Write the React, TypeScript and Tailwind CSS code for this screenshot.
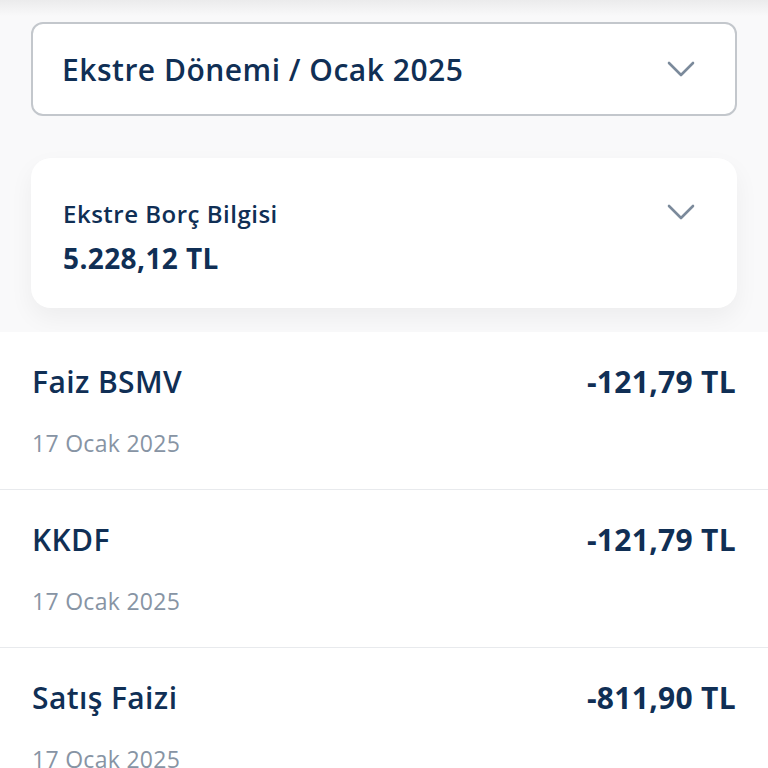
import { useState } from "react";

const rows = [
  { title: "Faiz BSMV", amount: "-121,79 TL", date: "17 Ocak 2025" },
  { title: "KKDF", amount: "-121,79 TL", date: "17 Ocak 2025" },
  { title: "Satış Faizi", amount: "-811,90 TL", date: "17 Ocak 2025" },
];

const Chevron = ({ className }: { className?: string }) => (
  <svg viewBox="0 0 28 16" className={className} fill="none">
    <path
      d="M2 2l12 12L26 2"
      stroke="currentColor"
      strokeWidth="2.6"
      strokeLinecap="round"
      strokeLinejoin="round"
    />
  </svg>
);

const App = () => {
  const [open, setOpen] = useState(false);

  return (
    <div className="w-[768px] h-[768px] overflow-hidden bg-[#f9f9fa] font-['Open_Sans',sans-serif] text-[#102f55]">
      <div className="h-[16px] bg-gradient-to-b from-[#ebebec] to-[#f9f9fa]" />

      <div className="px-[31px]">
        <button className="mt-[6px] w-full h-[94px] rounded-[12px] border-2 border-[#c3c7cc] bg-white flex items-center justify-between pl-[29px] pr-[40px]">
          <span className="text-[30px] font-semibold tracking-[0.5px]">
            Ekstre Dönemi / Ocak 2025
          </span>
          <Chevron className="w-[28px] h-[16px] text-[#7b8a9b]" />
        </button>

        <div
          className="mt-[42px] h-[150px] rounded-[20px] bg-white shadow-[0_10px_24px_rgba(0,0,0,0.05)] pl-[32px] pr-[42px] pt-[40px] flex justify-between"
          onClick={() => setOpen(!open)}
        >
          <div>
            <p className="text-[24px] font-semibold leading-[32px] tracking-[0.5px]">
              Ekstre Borç Bilgisi
            </p>
            <p className="mt-[11px] text-[28px] font-bold leading-[34px] tracking-[0.4px]">
              5.228,12 TL
            </p>
          </div>
          <Chevron className="mt-[6px] w-[28px] h-[16px] text-[#7b8a9b]" />
        </div>
      </div>

      <div className="mt-[24px] bg-white">
        {rows.map((r) => (
          <div
            key={r.title}
            className="h-[158px] border-b border-[#e8eaed] px-[32px] pt-[31px]"
          >
            <div className="flex justify-between items-center">
              <span className="text-[30px] font-semibold leading-[38px] tracking-[0.4px]">
                {r.title}
              </span>
              <span className="text-[30px] font-bold leading-[38px] tracking-[0.3px]">
                {r.amount}
              </span>
            </div>
            <p className="mt-[26px] text-[23px] leading-[32px] text-[#8794a4] tracking-[0.3px]">
              {r.date}
            </p>
          </div>
        ))}
      </div>
    </div>
  );
};

export default App;
